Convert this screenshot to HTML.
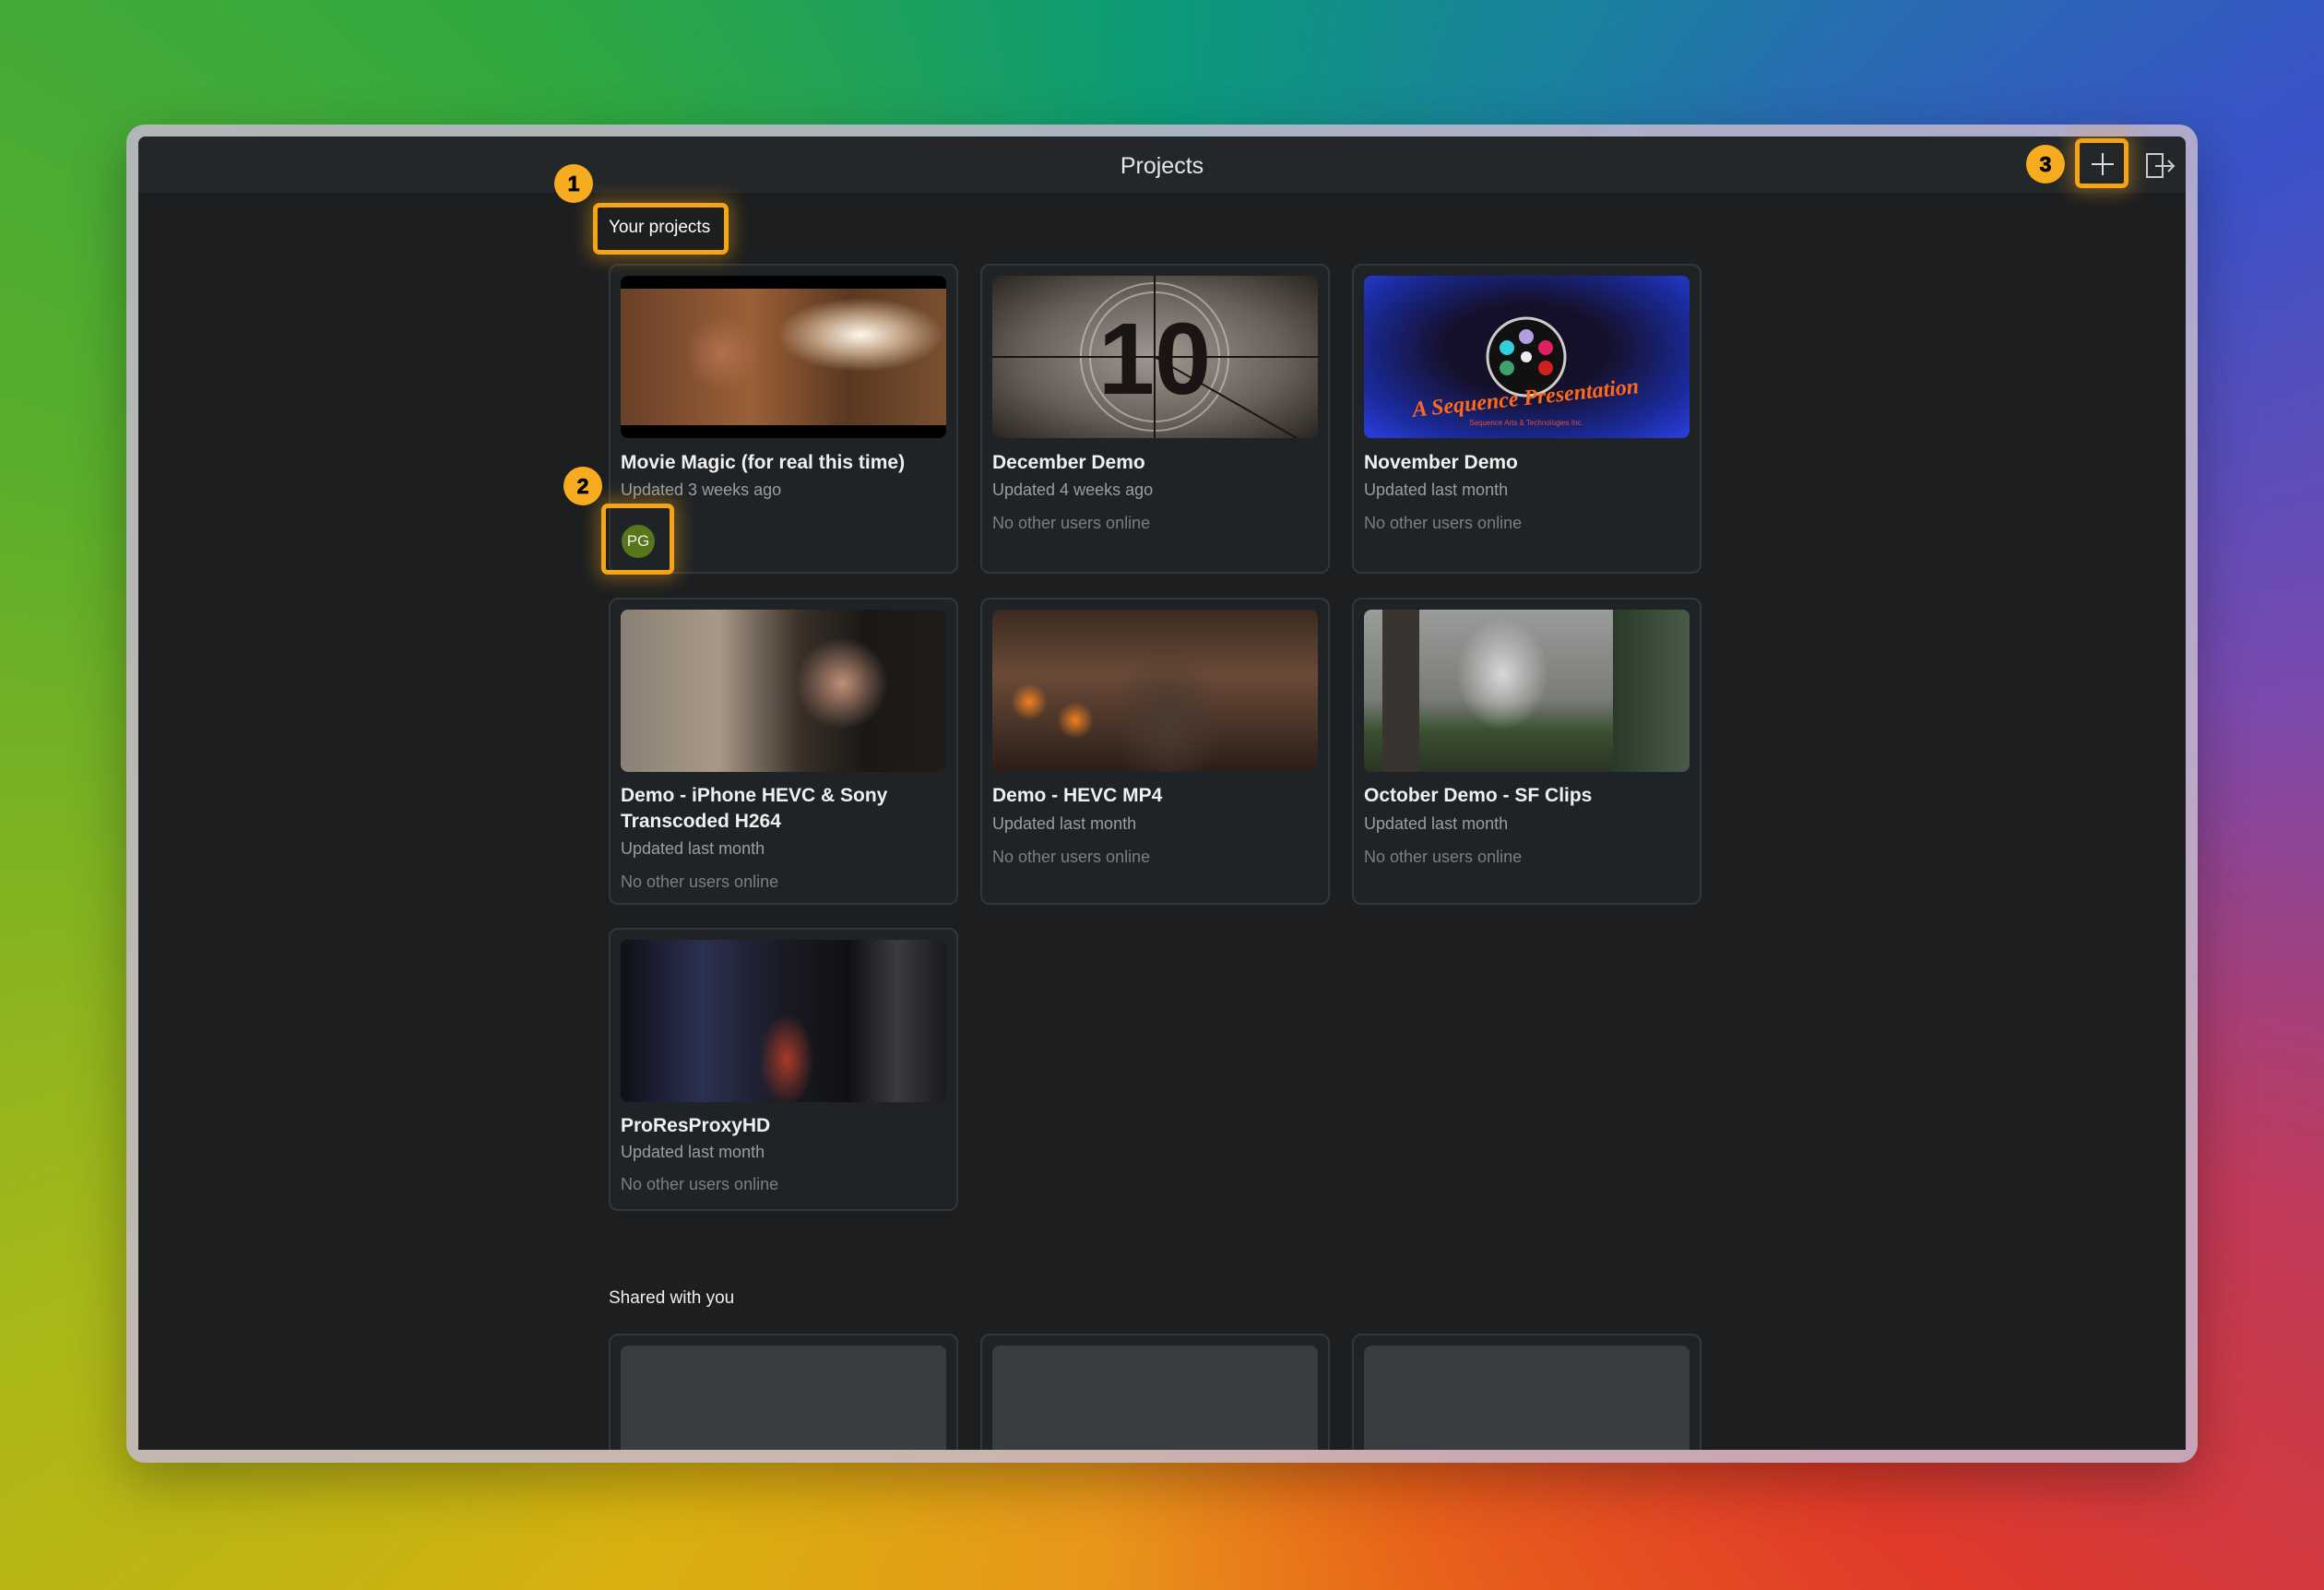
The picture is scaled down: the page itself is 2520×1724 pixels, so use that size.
<!DOCTYPE html>
<html><head><meta charset="utf-8"><style>
*{margin:0;padding:0;box-sizing:border-box}
html,body{width:2520px;height:1724px;overflow:hidden}
body{position:relative;font-family:"Liberation Sans",sans-serif;
background:conic-gradient(from 0deg at 50% 50%,#0c9a78 0deg,#1a80a0 30deg,#3a52c8 60deg,#7a4aae 85deg,#c03a5a 110deg,#e03a2a 135deg,#e8601a 160deg,#e8961a 185deg,#d8b010 215deg,#a8b818 245deg,#5cae2a 285deg,#30a840 320deg,#0c9a78 360deg);}
.a{position:absolute}
.frame{left:137px;top:135px;width:2246px;height:1451px;border-radius:20px;background:rgba(196,184,204,.85);box-shadow:0 20px 60px rgba(0,0,0,.3)}
.inner{left:150px;top:148px;width:2220px;height:1424px;background:#1c1e20;border-radius:8px 8px 0 0;overflow:hidden}
.hdr{left:0;top:0;width:2220px;height:61px;background:#24272a}
.ttl{left:0;top:18px;width:2220px;text-align:center;color:#e6e6e6;font-size:25px}
.card{position:absolute;width:379px;border:2px solid #34373a;border-radius:10px;background:#202325}
.th{position:absolute;left:11px;top:11px;width:353px;height:176px;border-radius:8px;overflow:hidden}
.t{position:absolute;left:11px;color:#f0f0f0;font-size:21px;font-weight:bold;line-height:28px;width:355px}
.s{position:absolute;left:11px;color:#9a9ea2;font-size:18px}
.n{position:absolute;left:11px;color:#7b7f83;font-size:18px}
.badge{position:absolute;width:42px;height:42px;border-radius:50%;background:#f7ab1f;color:#000;font-weight:900;font-size:23px;text-align:center;line-height:42px;-webkit-text-stroke:0.8px #000}
.hl{position:absolute;border:5px solid #f5a416;border-radius:7px;box-shadow:0 0 18px 6px rgba(245,164,22,.35)}
</style></head><body>
<div class="a frame"></div>
<div class="a inner">
 <div class="a hdr"></div>
 <div class="a ttl">Projects</div>
 <svg class="a" style="left:2110px;top:10px" width="40" height="40"><path d="M20 8V32M8 20H32" stroke="#ddd" stroke-width="2"/></svg>
 <svg class="a" style="left:2175px;top:15px" width="36" height="34"><rect x="3" y="4" width="17" height="25" fill="none" stroke="#ccc" stroke-width="2"/><path d="M12 17H32M26 11L32 17L26 23" fill="none" stroke="#ccc" stroke-width="2"/></svg>
</div>

<div class="a" style="left:660px;top:236px;color:#fff;font-size:19px">Your projects</div>

<div class="card" style="left:660px;top:286px;height:336px">
 <div class="th" style="background:#000"><div class="a" style="left:0;top:14px;width:353px;height:148px;background:radial-gradient(ellipse 90px 40px at 260px 50px,#fff8ee,rgba(255,230,200,.6) 50%,transparent 100%),radial-gradient(circle 40px at 110px 70px,#b07050,transparent),linear-gradient(90deg,#6a4028,#9a6038 40%,#5a3820 70%,#7a5030)"></div></div>
 <div class="t" style="top:200px">Movie Magic (for real this time)</div>
 <div class="s" style="top:233px">Updated 3 weeks ago</div>
 <div class="a" style="left:12px;top:281px;width:36px;height:36px;border-radius:50%;background:#58761a;color:#eee;font-size:17px;text-align:center;line-height:36px">PG</div>
</div>
<div class="card" style="left:1063px;top:286px;height:336px">
 <div class="th" style="background:radial-gradient(ellipse at 50% 50%,#a09890,#6a625a 55%,#2a2522)"><svg class="a" width="353" height="176"><circle cx="176" cy="88" r="80" fill="none" stroke="#ddd" stroke-opacity=".5" stroke-width="2"/><circle cx="176" cy="88" r="70" fill="none" stroke="#ddd" stroke-opacity=".5" stroke-width="2"/><path d="M176 0V176M0 88H353M176 88L330 176" stroke="#1a1512" stroke-width="2"/><text x="176" y="128" text-anchor="middle" font-family="Liberation Sans" font-weight="bold" font-size="110" fill="#1a1512">10</text></svg></div>
 <div class="t" style="top:200px">December Demo</div>
 <div class="s" style="top:233px">Updated 4 weeks ago</div>
 <div class="n" style="top:269px">No other users online</div>
</div>
<div class="card" style="left:1466px;top:286px;height:336px">
 <div class="th" style="background:radial-gradient(ellipse at 50% 45%,#15102a 35%,#1a2a9a 75%,#2a40e0)"><svg class="a" width="353" height="176"><circle cx="176" cy="88" r="42" fill="#111" stroke="#ccc" stroke-width="3"/><circle cx="176" cy="66" r="8" fill="#b0a0e0"/><circle cx="155" cy="78" r="8" fill="#30d0e0"/><circle cx="197" cy="78" r="8" fill="#e02060"/><circle cx="176" cy="88" r="6" fill="#eee"/><circle cx="155" cy="100" r="8" fill="#40a070"/><circle cx="197" cy="100" r="8" fill="#d02020"/><text x="176" y="140" text-anchor="middle" transform="rotate(-6 176 140)" font-family="Liberation Serif" font-style="italic" font-weight="bold" font-size="24" fill="#ff6a1a">A Sequence Presentation</text><text x="176" y="162" text-anchor="middle" font-family="Liberation Sans" font-size="8" fill="#e05030">Sequence Arts &amp; Technologies Inc.</text></svg></div>
 <div class="t" style="top:200px">November Demo</div>
 <div class="s" style="top:233px">Updated last month</div>
 <div class="n" style="top:269px">No other users online</div>
</div>

<div class="card" style="left:660px;top:648px;height:333px">
 <div class="th" style="background:radial-gradient(circle 50px at 240px 80px,#c0907a,transparent),linear-gradient(90deg,#8a8074,#a89a88 30%,#3a3028 55%,#1a1816 75%,#201c1a)"></div>
 <div class="t" style="top:199px">Demo - iPhone HEVC &amp; Sony Transcoded H264</div>
 <div class="s" style="top:260px">Updated last month</div>
 <div class="n" style="top:296px">No other users online</div>
</div>
<div class="card" style="left:1063px;top:648px;height:333px">
 <div class="th" style="background:radial-gradient(circle 20px at 90px 120px,#f08020,transparent),radial-gradient(circle 20px at 40px 100px,#f08020,transparent),radial-gradient(ellipse 60px 80px at 190px 120px,#4a3a30,transparent),linear-gradient(180deg,#3a2a20,#6a4a38 40%,#2a1e18)"></div>
 <div class="t" style="top:199px">Demo - HEVC MP4</div>
 <div class="s" style="top:233px">Updated last month</div>
 <div class="n" style="top:269px">No other users online</div>
</div>
<div class="card" style="left:1466px;top:648px;height:333px">
 <div class="th" style="background:radial-gradient(ellipse 50px 60px at 150px 70px,#d8d8d6,transparent),linear-gradient(180deg,#9a9c9a,#7a7c78 55%,#3a5030 75%,#2a3424);"><div class="a" style="left:20px;top:0;width:40px;height:176px;background:#3a3430"></div><div class="a" style="left:270px;top:0;width:83px;height:176px;background:linear-gradient(90deg,#2a3a28,#4a5a48)"></div></div>
 <div class="t" style="top:199px">October Demo - SF Clips</div>
 <div class="s" style="top:233px">Updated last month</div>
 <div class="n" style="top:269px">No other users online</div>
</div>

<div class="card" style="left:660px;top:1006px;height:307px">
 <div class="th" style="background:radial-gradient(ellipse 30px 50px at 180px 130px,#a83a28,transparent),linear-gradient(90deg,#101018,#2a3050 25%,#1a1a24 50%,#101014 70%,#3a3a40 85%,#1a1a1e)"></div>
 <div class="t" style="top:199px">ProResProxyHD</div>
 <div class="s" style="top:231px">Updated last month</div>
 <div class="n" style="top:266px">No other users online</div>
</div>

<div class="a" style="left:660px;top:1397px;color:#eee;font-size:19px">Shared with you</div>
<div class="a" style="left:150px;top:1446px;width:2220px;height:126px;overflow:hidden">
 <div class="card" style="left:510px;top:0;height:200px"><div class="th" style="background:#393d40"></div></div>
 <div class="card" style="left:913px;top:0;height:200px"><div class="th" style="background:#393d40"></div></div>
 <div class="card" style="left:1316px;top:0;height:200px"><div class="th" style="background:#393d40"></div></div>
</div>

<div class="hl" style="left:643px;top:220px;width:147px;height:56px"></div>
<div class="badge" style="left:601px;top:178px">1</div>
<div class="hl" style="left:652px;top:546px;width:79px;height:77px"></div>
<div class="badge" style="left:611px;top:506px">2</div>
<div class="hl" style="left:2250px;top:150px;width:58px;height:54px"></div>
<div class="badge" style="left:2197px;top:157px">3</div>
</body></html>
